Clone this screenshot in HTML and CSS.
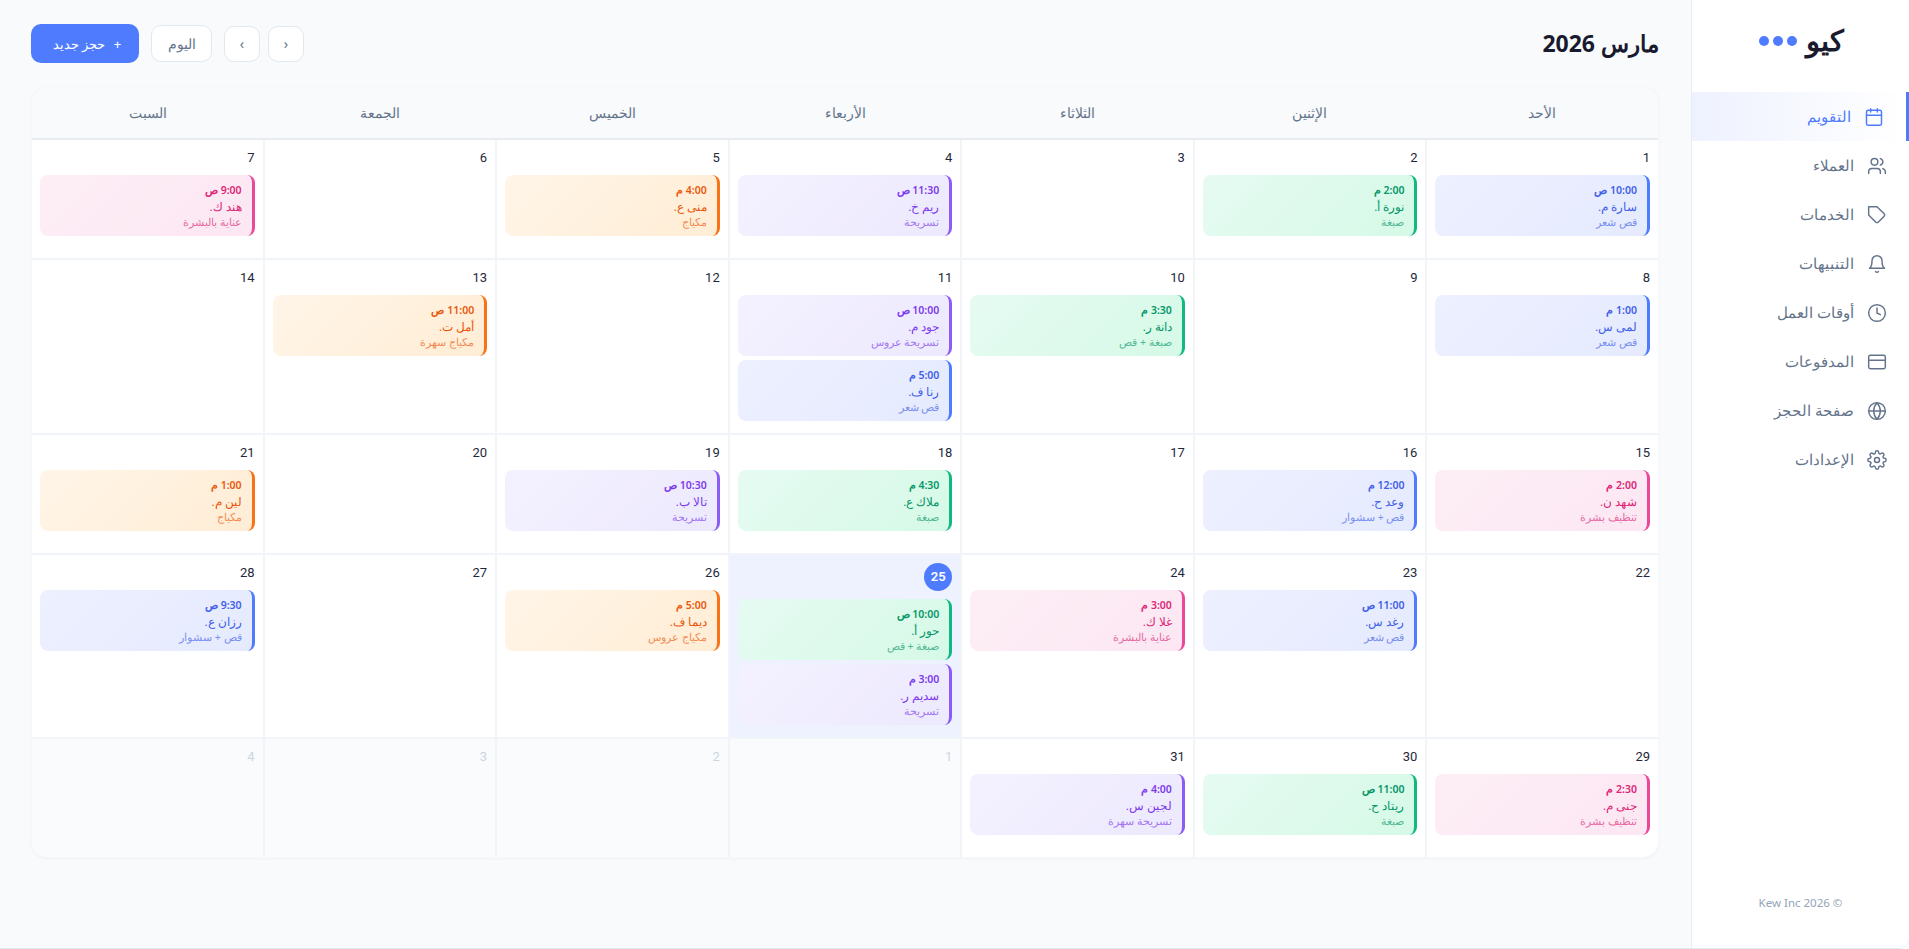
FILE: index.html
```html
<!DOCTYPE html>
<html lang="ar" dir="rtl">
<head>
<meta charset="utf-8">
<title>كيو</title>
<link rel="stylesheet" href="styles.css">
</head>
<body>
<div class="app">
  <aside class="sidebar">
    <div class="logo"><span class="logo-text">كيو</span><span class="dots"><i></i><i></i><i></i></span></div>
    <nav class="nav">
      <a class="nav-item active"><svg viewBox="0 0 24 24"><rect x="3" y="4" width="18" height="18" rx="2"/><path d="M16 2v4M8 2v4M3 10h18"/></svg><span>التقويم</span></a>
      <a class="nav-item"><svg viewBox="0 0 24 24"><path d="M16 21v-2a4 4 0 0 0-4-4H6a4 4 0 0 0-4 4v2"/><circle cx="9" cy="7" r="4"/><path d="M22 21v-2a4 4 0 0 0-3-3.87M16 3.13a4 4 0 0 1 0 7.75"/></svg><span>العملاء</span></a>
      <a class="nav-item"><svg viewBox="0 0 24 24"><path d="M20.59 13.41l-7.17 7.17a2 2 0 0 1-2.83 0L2 12V2h10l8.59 8.59a2 2 0 0 1 0 2.82z"/></svg><span>الخدمات</span></a>
      <a class="nav-item"><svg viewBox="0 0 24 24"><path d="M18 8a6 6 0 0 0-12 0c0 7-3 9-3 9h18s-3-2-3-9"/><path d="M13.73 21a2 2 0 0 1-3.46 0"/></svg><span>التنبيهات</span></a>
      <a class="nav-item"><svg viewBox="0 0 24 24"><circle cx="12" cy="12" r="10"/><path d="M12 6v6l4 2"/></svg><span>أوقات العمل</span></a>
      <a class="nav-item"><svg viewBox="0 0 24 24"><rect x="2" y="4" width="20" height="16" rx="2"/><path d="M2 10h20"/></svg><span>المدفوعات</span></a>
      <a class="nav-item"><svg viewBox="0 0 24 24"><circle cx="12" cy="12" r="10"/><path d="M2 12h20M12 2a15.3 15.3 0 0 1 4 10 15.3 15.3 0 0 1-4 10 15.3 15.3 0 0 1-4-10 15.3 15.3 0 0 1 4-10z"/></svg><span>صفحة الحجز</span></a>
      <a class="nav-item"><svg viewBox="0 0 24 24"><circle cx="12" cy="12" r="3"/><path d="M19.4 15a1.65 1.65 0 0 0 .33 1.82l.06.06a2 2 0 1 1-2.83 2.83l-.06-.06a1.65 1.65 0 0 0-2.82 1.17V21a2 2 0 1 1-4 0v-.09A1.65 1.65 0 0 0 9 19.4a1.65 1.65 0 0 0-1.82.33l-.06.06a2 2 0 1 1-2.83-2.83l.06-.06a1.65 1.65 0 0 0-1.17-2.82H3a2 2 0 1 1 0-4h.09A1.65 1.65 0 0 0 4.6 9a1.65 1.65 0 0 0-.33-1.82l-.06-.06a2 2 0 1 1 2.83-2.83l.06.06a1.65 1.65 0 0 0 1.82.33H9a1.65 1.65 0 0 0 1-1.51V3a2 2 0 1 1 4 0v.09a1.65 1.65 0 0 0 1 1.51 1.65 1.65 0 0 0 1.82-.33l.06-.06a2 2 0 1 1 2.83 2.83l-.06.06a1.65 1.65 0 0 0-.33 1.82V9a1.65 1.65 0 0 0 1.51 1H21a2 2 0 1 1 0 4h-.09a1.65 1.65 0 0 0-1.51 1z"/></svg><span>الإعدادات</span></a>
    </nav>
    <div class="copyright" dir="ltr">Kew Inc 2026 ©</div>
  </aside>
  <main class="main">
    <header class="topbar">
      <h1 class="title">مارس 2026</h1>
      <div class="actions">
        <button class="btn-icon">‹</button>
        <button class="btn-icon">›</button>
        <button class="btn-today">اليوم</button>
        <button class="btn-new"><span class="plus">+</span> حجز جديد</button>
      </div>
    </header>
    <section class="calendar">
      <div class="head">
        <div>الأحد</div><div>الإثنين</div><div>الثلاثاء</div><div>الأربعاء</div><div>الخميس</div><div>الجمعة</div><div>السبت</div>
      </div>
      <div class="days">
        <div class="day"><div class="num">1</div><div class="ev blue"><b>10:00 ص</b><p>سارة م.</p><small>قص شعر</small></div></div>
        <div class="day"><div class="num">2</div><div class="ev green"><b>2:00 م</b><p>نورة أ.</p><small>صبغة</small></div></div>
        <div class="day"><div class="num">3</div></div>
        <div class="day"><div class="num">4</div><div class="ev purple"><b>11:30 ص</b><p>ريم خ.</p><small>تسريحة</small></div></div>
        <div class="day"><div class="num">5</div><div class="ev orange"><b>4:00 م</b><p>منى ع.</p><small>مكياج</small></div></div>
        <div class="day"><div class="num">6</div></div>
        <div class="day"><div class="num">7</div><div class="ev pink"><b>9:00 ص</b><p>هند ك.</p><small>عناية بالبشرة</small></div></div>

        <div class="day"><div class="num">8</div><div class="ev blue"><b>1:00 م</b><p>لمى س.</p><small>قص شعر</small></div></div>
        <div class="day"><div class="num">9</div></div>
        <div class="day"><div class="num">10</div><div class="ev green"><b>3:30 م</b><p>دانة ر.</p><small>صبغة + قص</small></div></div>
        <div class="day"><div class="num">11</div><div class="ev purple"><b>10:00 ص</b><p>جود م.</p><small>تسريحة عروس</small></div><div class="ev blue"><b>5:00 م</b><p>رنا ف.</p><small>قص شعر</small></div></div>
        <div class="day"><div class="num">12</div></div>
        <div class="day"><div class="num">13</div><div class="ev orange"><b>11:00 ص</b><p>أمل ت.</p><small>مكياج سهرة</small></div></div>
        <div class="day"><div class="num">14</div></div>

        <div class="day"><div class="num">15</div><div class="ev pink"><b>2:00 م</b><p>شهد ن.</p><small>تنظيف بشرة</small></div></div>
        <div class="day"><div class="num">16</div><div class="ev blue"><b>12:00 م</b><p>وعد ح.</p><small>قص + سشوار</small></div></div>
        <div class="day"><div class="num">17</div></div>
        <div class="day"><div class="num">18</div><div class="ev green"><b>4:30 م</b><p>ملاك ع.</p><small>صبغة</small></div></div>
        <div class="day"><div class="num">19</div><div class="ev purple"><b>10:30 ص</b><p>تالا ب.</p><small>تسريحة</small></div></div>
        <div class="day"><div class="num">20</div></div>
        <div class="day"><div class="num">21</div><div class="ev orange"><b>1:00 م</b><p>لين م.</p><small>مكياج</small></div></div>

        <div class="day"><div class="num">22</div></div>
        <div class="day"><div class="num">23</div><div class="ev blue"><b>11:00 ص</b><p>رغد س.</p><small>قص شعر</small></div></div>
        <div class="day"><div class="num">24</div><div class="ev pink"><b>3:00 م</b><p>غلا ك.</p><small>عناية بالبشرة</small></div></div>
        <div class="day today"><div class="num">25</div><div class="ev green"><b>10:00 ص</b><p>حور أ.</p><small>صبغة + قص</small></div><div class="ev purple"><b>3:00 م</b><p>سديم ر.</p><small>تسريحة</small></div></div>
        <div class="day"><div class="num">26</div><div class="ev orange"><b>5:00 م</b><p>ديما ف.</p><small>مكياج عروس</small></div></div>
        <div class="day"><div class="num">27</div></div>
        <div class="day"><div class="num">28</div><div class="ev blue"><b>9:30 ص</b><p>رزان ع.</p><small>قص + سشوار</small></div></div>

        <div class="day"><div class="num">29</div><div class="ev pink"><b>2:30 م</b><p>جنى م.</p><small>تنظيف بشرة</small></div></div>
        <div class="day"><div class="num">30</div><div class="ev green"><b>11:00 ص</b><p>ريتاد ح.</p><small>صبغة</small></div></div>
        <div class="day"><div class="num">31</div><div class="ev purple"><b>4:00 م</b><p>لجين س.</p><small>تسريحة سهرة</small></div></div>
        <div class="day other"><div class="num">1</div></div>
        <div class="day other"><div class="num">2</div></div>
        <div class="day other"><div class="num">3</div></div>
        <div class="day other"><div class="num">4</div></div>
      </div>
    </section>
  </main>
</div>
</body>
</html>
```
FILE: styles.css
```css
* { box-sizing: border-box; }
html, body { margin: 0; height: 100%; }
body {
  font-family: "Noto Sans", "Open Sans", sans-serif;
  background: #fff;
  color: #1a1a2e;
  overflow: hidden;
}
.app {
  display: flex;
  height: 949px;
  border-bottom: 1px solid #e2e8f0;
  border-radius: 0 0 10px 0;
  overflow: hidden;
  background: #f8fafc;
}

.sidebar {
  width: 218px;
  flex: none;
  background: #fff;
  border-left: 1px solid #e9ecf1;
  display: flex;
  flex-direction: column;
}
.logo {
  height: 92px;
  display: flex;
  align-items: center;
  justify-content: center;
  gap: 9px;
  padding: 0 0 10px 2px;
}
.logo-text { font-size: 29px; font-weight: 800; line-height: 1; margin-bottom: 4px; color: #1a1a2e; }
.dots { display: flex; gap: 4px; }
.dots i { width: 10px; height: 10px; border-radius: 50%; background: #4f7cff; }
.nav { display: flex; flex-direction: column; }
.nav-item {
  height: 49px;
  display: flex;
  align-items: center;
  gap: 13px;
  padding: 0 22px;
  font-size: 15px;
  color: #64748b;
}
.nav-item span { margin-bottom: 2px; }
.nav-item svg {
  width: 20px;
  height: 20px;
  flex: none;
  fill: none;
  stroke: currentColor;
  stroke-width: 1.75;
  stroke-linecap: round;
  stroke-linejoin: round;
}
.nav-item.active {
  color: #4f7cff;
  border-right: 3px solid #4f7cff;
  background: linear-gradient(to right, #eef2ff, #fff);
}
.copyright {
  margin-top: auto;
  padding-bottom: 38px;
  text-align: center;
  font-size: 11.5px;
  color: #94a3b8;
}

.main { flex: 1; min-width: 0; padding: 24px 32px 0 31px; }
.topbar { display: flex; align-items: center; justify-content: space-between; height: 39px; margin-bottom: 23px; }
.title { margin: 0 0 2px; font-size: 23px; font-weight: 700; color: #1a1a2e; }
.actions { display: flex; align-items: center; gap: 8px; }
.btn-icon, .btn-today {
  font: inherit;
  background: #fff;
  border: 1px solid #e2e8f0;
  border-radius: 10px;
  color: #64748b;
}
.btn-icon { width: 36px; height: 36px; font-size: 14px; padding: 0; }
.btn-today { width: 61px; height: 37px; font-size: 13.5px; padding: 0; margin-right: 4px; }
.btn-new {
  font: inherit;
  font-size: 13px;
  font-weight: 500;
  width: 108px;
  height: 39px;
  margin-right: 4px;
  padding: 0 0 0 4px;
  border: 0;
  border-radius: 10px;
  background: #4f7cff;
  color: #fff;
}
.plus { margin-left: 5px; }

.calendar {
  border: 1px solid #f6f8fb;
  border-radius: 16px;
  overflow: hidden;
  background: #f1f5f9;
  box-shadow: 0 1px 3px rgba(15, 23, 42, .04);
}
.head {
  display: grid;
  grid-template-columns: repeat(7, 1fr);
  height: 53px;
  background: #f8fafc;
  border-bottom: 2px solid #e8ecf2;
}
.head div {
  display: flex;
  align-items: center;
  justify-content: center;
  font-size: 14px;
  font-weight: 400;
  color: #64748b;
}
.days { display: grid; grid-template-columns: repeat(7, 1fr); gap: 2px; }
.day { min-height: 118px; background: #fff; padding: 8px; }
.num { font-family: Roboto, "Noto Sans", sans-serif; font-size: 13px; line-height: 19px; margin-bottom: 8px; color: #1e293b; }
.day.today { background: #eef2ff; }
.day.today .num {
  width: 28px;
  height: 28px;
  line-height: 28px;
  border-radius: 50%;
  text-align: center;
  background: #4f7cff;
  color: #fff;
  font-weight: 600;
}
.day.other { background: #fafbfc; }
.day.other .num { color: #cbd5e1; }

.ev {
  height: 61px;
  margin-bottom: 4px;
  padding: 8px 10px;
  border-radius: 8px;
  border-right: 3px solid;
}
.ev b { display: block; font-size: 10.5px; line-height: 15px; font-weight: 600; }
.ev p { margin: 0; font-size: 11.5px; line-height: 17px; }
.ev small { display: block; font-size: 10.5px; line-height: 15px; opacity: .65; }
.blue { border-color: #4f7cff; background: linear-gradient(135deg, #edf0ff, #e5eafe); color: #4060e8; }
.green { border-color: #10b981; background: linear-gradient(135deg, #e6fbf2, #d6f9e7); color: #059669; }
.purple { border-color: #8b5cf6; background: linear-gradient(135deg, #f4f1ff, #ede9fe); color: #7c3aed; }
.orange { border-color: #f97316; background: linear-gradient(135deg, #fff5e8, #ffedd5); color: #ea580c; }
.pink { border-color: #ec4899; background: linear-gradient(135deg, #fdeef5, #fce7f3); color: #db2777; }
```
